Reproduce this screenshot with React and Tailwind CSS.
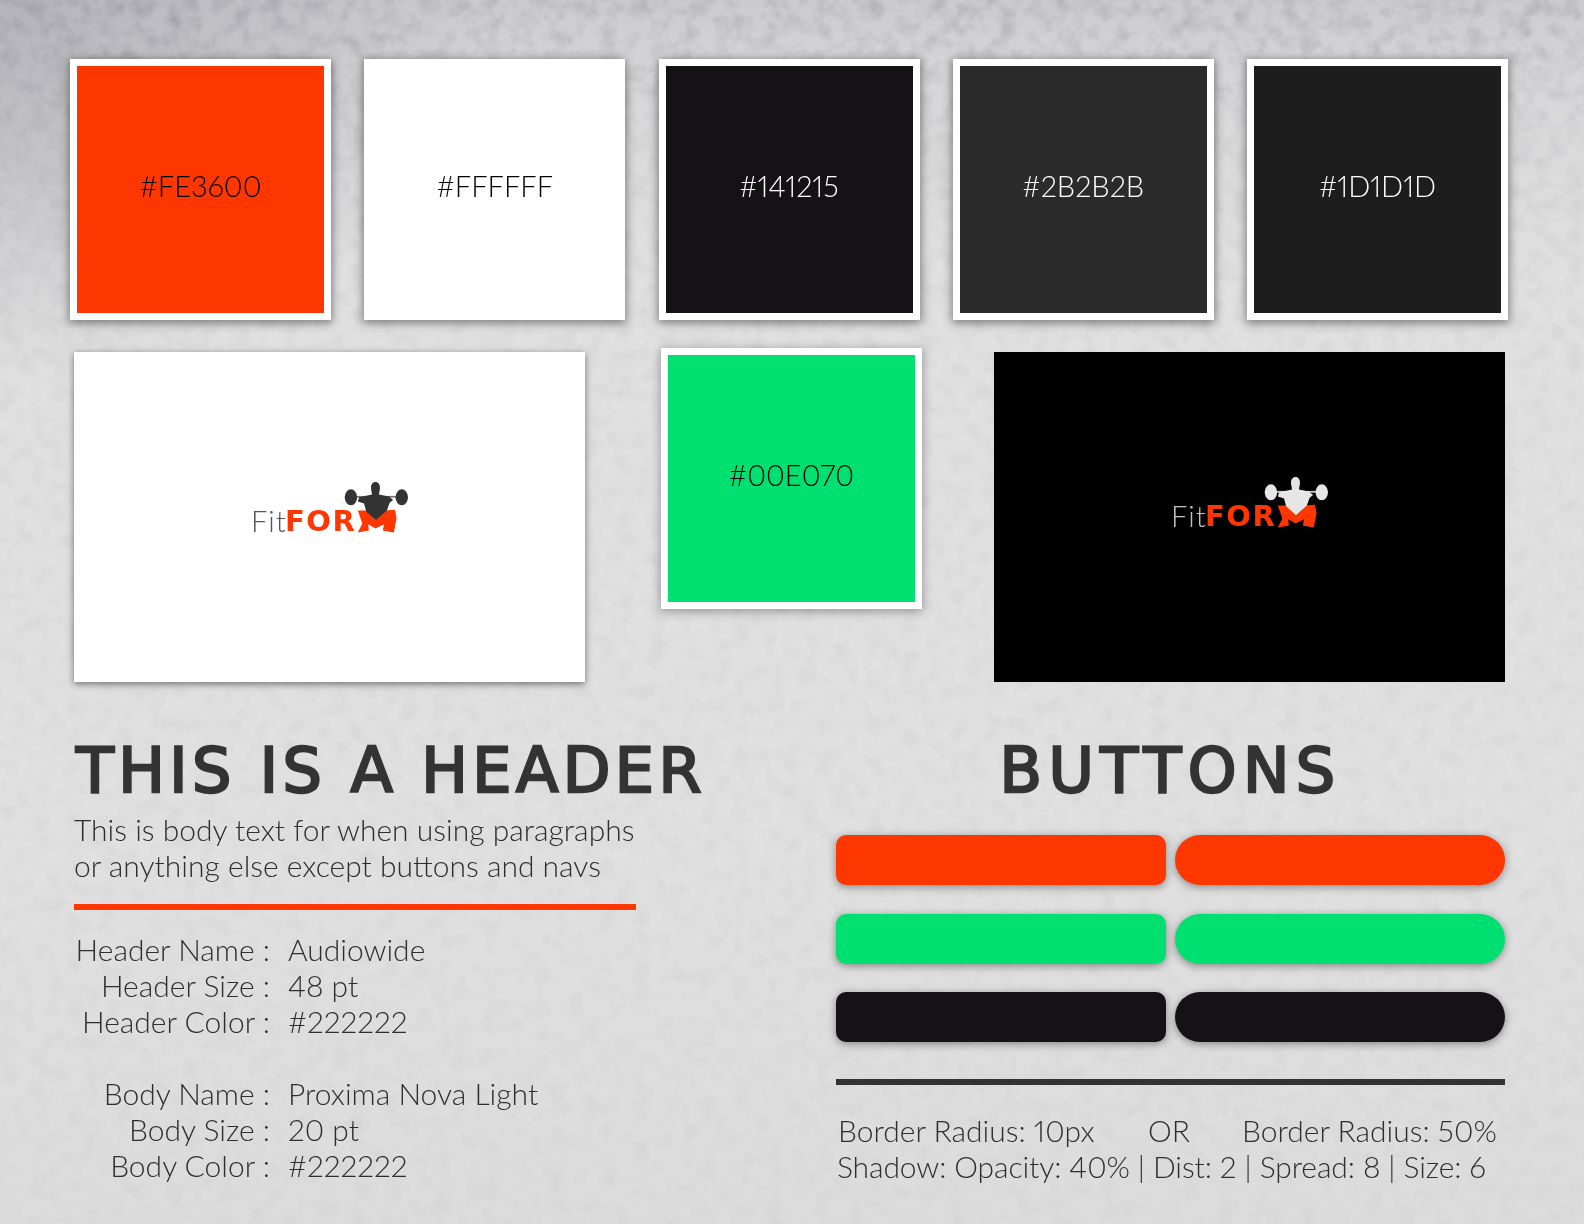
const sans = "font-['Lato','Open_Sans',sans-serif]";
const titular = "font-['DejaVu_Sans',sans-serif] font-normal text-[62px] leading-[68px] text-[#333333] whitespace-nowrap [-webkit-text-stroke:2.4px_#333333]";

const swatches = [
  { hex: '#FE3600', bg: 'bg-[#fe3600]', text: 'text-black' },
  { hex: '#FFFFFF', bg: 'bg-white', text: 'text-black' },
  { hex: '#141215', bg: 'bg-[#141215]', text: 'text-white' },
  { hex: '#2B2B2B', bg: 'bg-[#2b2b2b]', text: 'text-white' },
  { hex: '#1D1D1D', bg: 'bg-[#1d1d1d]', text: 'text-white' },
];

const Swatch = ({ hex, bg, text }) => (
  <div className={`w-[261px] h-[261px] border-[7px] border-white shadow-[0_2px_9px_1px_rgba(0,0,0,0.45)] flex items-center justify-center pb-[8px] text-[29px] font-light proportional-nums ${bg} ${text}`}>
    {hex}
  </div>
);

const Logo = ({ dark }) => (
  <div className="relative w-[157px] h-[52px] flex items-end">
    <span className={`font-['Lato',sans-serif] font-light text-[29px] leading-[24px] tracking-[1px] w-[34px] ${dark ? 'text-[#c4c4c4]' : 'text-[#555555]'}`}>Fit</span>
    <span className="font-['DejaVu_Sans',sans-serif] font-bold text-[29px] leading-[24px] tracking-[1.5px] text-[#fe3600]">FOR</span>
    <svg viewBox="350 65 185 150" className="absolute right-0 top-0 w-[64px] h-[52px]">
      <rect x="375" y="108" width="140" height="5" fill={dark ? '#cccccc' : '#777777'} />
      <ellipse cx="370" cy="112" rx="18" ry="23" fill={dark ? '#e6e6e6' : '#333333'} />
      <ellipse cx="517" cy="112" rx="18" ry="23" fill={dark ? '#e6e6e6' : '#333333'} />
      <path d="M390 150 L416 150 L441 178 L468 150 L497 148 L502 172 L494 214 L462 208 L466 190 L441 202 L420 190 L422 208 L390 214 L403 188 Z" fill="#fe3600" />
      <path d="M441 68 C452 68 456 80 453 92 L451 104 L480 110 L492 120 L482 128 L474 150 L442 178 L414 152 L408 130 L390 124 L394 112 L431 104 L429 92 C426 80 430 68 441 68 Z" fill={dark ? '#e6e6e6' : '#333333'} />
    </svg>
  </div>
);

const specs = [
  [['Header Name :', 'Audiowide'], ['Header Size :', '48 pt'], ['Header Color :', '#222222']],
  [['Body Name :', 'Proxima Nova Light'], ['Body Size :', '20 pt'], ['Body Color :', '#222222']],
];

const buttonRows = ['bg-[#fe3600]', 'bg-[#00e070]', 'bg-[#141215]'];

export default function App() {
  return (
    <div className={`relative w-[1584px] h-[1224px] overflow-hidden bg-[#dcdcdc] ${sans}`}>
      {/* textura de hormigón */}
      <div className="absolute inset-0 bg-[radial-gradient(ellipse_at_0%_0%,#b4b4ba_0%,transparent_22%),linear-gradient(180deg,#cbcbcf_0%,#d6d6d8_6%,#e0e0e0_22%,#e0e0e0_70%,#dcdcdc_100%)]" />
      <svg className="absolute inset-0 w-full h-full mix-blend-multiply" width="1584" height="1224">
        <filter id="grano">
          <feTurbulence type="fractalNoise" baseFrequency="0.06" numOctaves="5" seed="7" />
          <feColorMatrix values="0 0 0 0 0.6  0 0 0 0 0.6  0 0 0 0 0.62  0.9 0.9 0 0 -0.78" />
        </filter>
        <linearGradient id="fundido" x1="0" y1="0" x2="0" y2="1">
          <stop offset="0" stopColor="white" />
          <stop offset="0.12" stopColor="#777777" />
          <stop offset="0.35" stopColor="#444444" />
          <stop offset="1" stopColor="#333333" />
        </linearGradient>
        <mask id="capa"><rect width="1584" height="1224" fill="url(#fundido)" /></mask>
        <g mask="url(#capa)"><rect width="1584" height="1224" filter="url(#grano)" /></g>
      </svg>

      <div className="relative pt-[59px]">
        <div className="flex justify-between w-[1438px] ml-[70px]">
          {swatches.map((s) => <Swatch key={s.hex} {...s} />)}
        </div>

        <div className="flex items-start ml-[74px] mt-[28px]">
          <div className="mt-[4px] w-[511px] h-[330px] bg-white shadow-[0_2px_7px_rgba(0,0,0,0.5)] flex items-center justify-center pb-[20px]">
            <Logo />
          </div>
          <div className="ml-[76px] w-[261px] h-[261px] border-[7px] border-white bg-[#00e070] shadow-[0_2px_9px_1px_rgba(0,0,0,0.3)] flex items-center justify-center pb-[8px] text-[29px] font-light proportional-nums text-black">
            #00E070
          </div>
          <div className="ml-[72px] mt-[4px] w-[511px] h-[330px] bg-black flex items-center justify-center pb-[30px]">
            <Logo dark />
          </div>
        </div>

        <div className="flex mt-[54px] text-[#2e2e2e] text-[30px] font-light proportional-nums">
          <div className="w-[836px] pl-[74px]">
            <h1 className={`${titular} tracking-[4.4px] pl-[2px] pt-[1px]`}>THIS IS A HEADER</h1>
            <p className="mt-[6px] leading-[36px] w-[620px]">
              This is body text for when using paragraphs<br />or anything else except buttons and navs
            </p>
            <div className="mt-[21px] w-[562px] h-[6px] bg-[#fe3600]" />
            <div className="mt-[21px] flex flex-col gap-[36px]">
              {specs.map((group, i) => (
                <div key={i}>
                  {group.map(([label, value]) => (
                    <div key={label} className="flex leading-[36px]">
                      <span className="w-[196px] text-right whitespace-nowrap">{label}</span>
                      <span className="ml-[18px]">{value}</span>
                    </div>
                  ))}
                </div>
              ))}
            </div>
          </div>

          <div className="w-[669px]">
            <h2 className={`${titular} tracking-[6.4px] text-center pt-[1px]`}>BUTTONS</h2>
            <div className="mt-[30px] flex flex-col gap-[28.5px]">
              {buttonRows.map((bg) => (
                <div key={bg} className="flex gap-[9px]">
                  <div className={`flex-1 h-[50px] rounded-[10px] shadow-[0_2px_8px_rgba(0,0,0,0.4)] ${bg}`} />
                  <div className={`flex-1 h-[50px] rounded-full shadow-[0_2px_8px_rgba(0,0,0,0.4)] ${bg}`} />
                </div>
              ))}
            </div>
            <div className="mt-[37px] h-[6px] bg-[#333333]" />
            <div className="mt-[27px] leading-[36px] whitespace-nowrap">
              <div className="flex pl-[2px]">
                <span className="w-[310px]">Border Radius: 10px</span>
                <span className="w-[94px]">OR</span>
                <span>Border Radius: 50%</span>
              </div>
              <div className="pl-[1px] tracking-[-0.1px]">Shadow: Opacity: 40% | Dist: 2 | Spread: 8 | Size: 6</div>
            </div>
          </div>
        </div>
      </div>
    </div>
  );
}
